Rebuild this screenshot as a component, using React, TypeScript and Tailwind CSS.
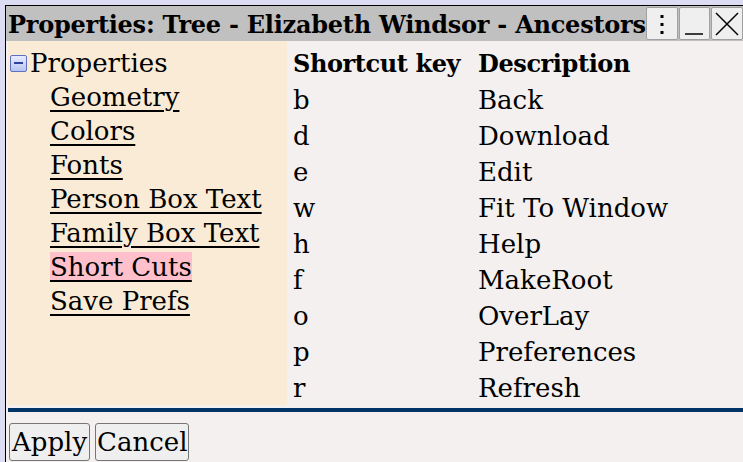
import { useState } from 'react';

const MENU = ['Geometry', 'Colors', 'Fonts', 'Person Box Text', 'Family Box Text', 'Short Cuts', 'Save Prefs'];

const SHORTCUTS = [
  { key: 'b', desc: 'Back' },
  { key: 'd', desc: 'Download' },
  { key: 'e', desc: 'Edit' },
  { key: 'w', desc: 'Fit To Window' },
  { key: 'h', desc: 'Help' },
  { key: 'f', desc: 'MakeRoot' },
  { key: 'o', desc: 'OverLay' },
  { key: 'p', desc: 'Preferences' },
  { key: 'r', desc: 'Refresh' },
];

export default function App() {
  const [active, setActive] = useState('Short Cuts');

  return (
    <div
      className="w-[743px] h-[462px] overflow-hidden bg-[#dcdcf2] pt-[5px] pl-[5px] text-black"
      style={{ fontFamily: '"DejaVu Serif", serif' }}
    >
      <div className="w-[745px] h-[470px] border border-black bg-[#f3f0ef] flex flex-col">
        <div className="h-[35px] bg-[#c0c0c0] flex items-center pl-[2px]">
          <div className="flex-1 text-[24px] tracking-[-0.25px] font-bold whitespace-nowrap leading-none pt-[2px]">
            Properties: Tree - Elizabeth Windsor - Ancestors
          </div>
          <div className="flex gap-[1px] h-[33px] mr-[7px]">
            <button className="w-[32px] border border-[#a0a0a0] bg-[#efefef] rounded-[2px] flex items-center justify-center">
              <svg width="6" height="22" viewBox="0 0 6 22">
                <rect x="1.5" y="2" width="3" height="3" fill="#000" />
                <rect x="1.5" y="10" width="3" height="3" fill="#000" />
                <rect x="1.5" y="18" width="3" height="3" fill="#000" />
              </svg>
            </button>
            <button className="w-[31px] border border-[#a0a0a0] bg-[#efefef] rounded-[2px] flex items-center justify-center">
              <svg width="22" height="26" viewBox="0 0 22 26">
                <line x1="2" y1="23" x2="20" y2="23" stroke="#000" strokeWidth="1.5" />
              </svg>
            </button>
            <button className="w-[32px] border border-[#a0a0a0] bg-[#efefef] rounded-[2px] flex items-center justify-center">
              <svg width="26" height="26" viewBox="0 0 26 26">
                <path d="M2 2 L24 24 M24 2 L2 24" stroke="#000" strokeWidth="1.5" />
              </svg>
            </button>
          </div>
        </div>

        <div className="flex pl-[2px] h-[364px]">
          <div className="w-[279px] bg-[#faebd7] pt-[5px] text-[26px] leading-[34px]">
            <div className="flex items-center pl-[2px]">
              <span className="w-[17px] h-[17px] mr-[3px] border border-[#6070c0] rounded-[2px] bg-gradient-to-b from-[#e8ecff] to-[#b8c4f0] flex items-center justify-center">
                <span className="w-[9px] h-[2px] bg-[#3040a0]" />
              </span>
              Properties
            </div>
            {MENU.map((m) => (
              <div key={m} className="pl-[42px]">
                <span
                  onClick={() => setActive(m)}
                  className={`underline decoration-2 underline-offset-[4px] cursor-pointer ${
                    active === m ? 'bg-[#ffc0cb]' : ''
                  }`}
                >
                  {m}
                </span>
              </div>
            ))}
          </div>
          <div className="flex-1 pl-[6px] pt-[5px] text-[26px]">
            <div className="grid grid-cols-[185px_1fr] auto-rows-[36px] items-center">
              <div className="font-bold text-[24px] tracking-[-0.4px]">Shortcut key</div>
              <div className="font-bold text-[24px] tracking-[-0.4px]">Description</div>
              {SHORTCUTS.map((s) => [
                <div key={s.key + 'k'}>{s.key}</div>,
                <div key={s.key + 'd'}>{s.desc}</div>,
              ])}
            </div>
          </div>
        </div>

        <div className="ml-[2px] h-[4px] bg-[#003366] mt-[3px]" />

        <div className="flex gap-[5px] pl-[3px] pt-[11px] text-[26px]">
          <button className="h-[38px] px-[2px] border border-[#767676] rounded-[3px] bg-[#efefef] leading-none">
            Apply
          </button>
          <button className="h-[38px] px-[1px] border border-[#767676] rounded-[3px] bg-[#efefef] leading-none">
            Cancel
          </button>
        </div>
      </div>
    </div>
  );
}
